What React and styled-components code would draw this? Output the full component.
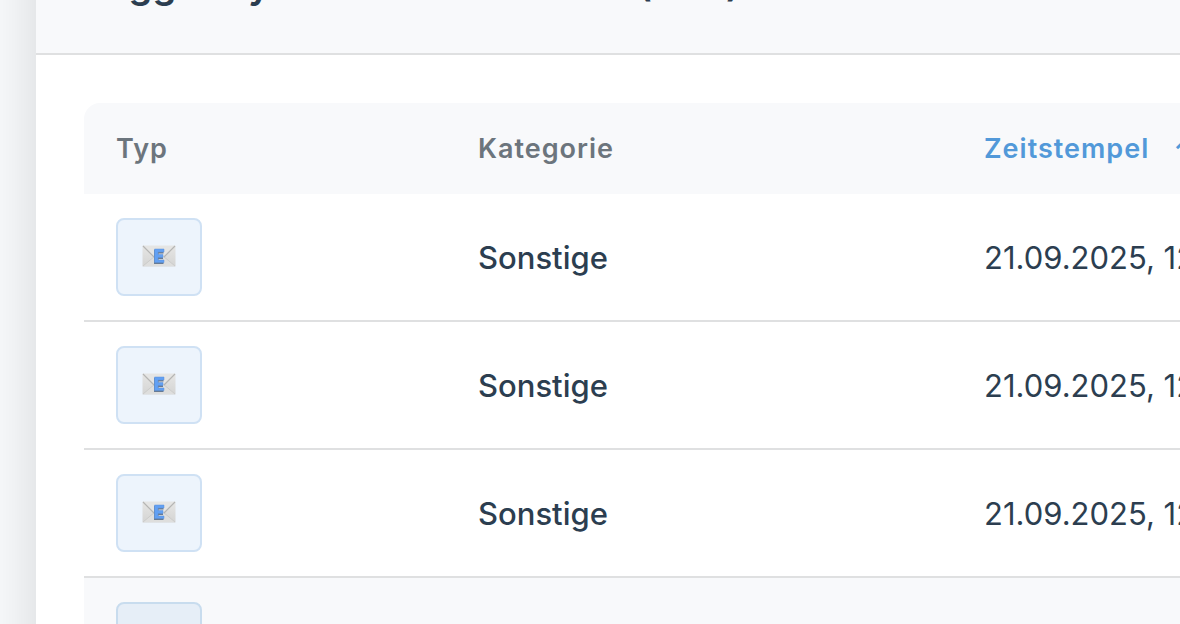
import React from "react";
import styled, { createGlobalStyle } from "styled-components";

const GlobalStyle = createGlobalStyle`
  * { box-sizing: border-box; }
  html, body, #root { height: 100%; }
  body {
    margin: 0;
    overflow: hidden;
    background: #f8fafc;
    color: #2c3e50;
    font-family: Inter, "Liberation Sans", sans-serif;
  }
`;

const Page = styled.main`
  height: 100%;
  overflow: hidden;
  padding-left: 36px;
`;

const Card = styled.section`
  min-height: calc(100% + 72px);
  margin-top: -72px;
  background: #fff;
  box-shadow: 0 8px 56px rgba(0, 0, 0, 0.15);
`;

const CardHeader = styled.header`
  padding: 34px 48px 46px;
  background: #f8f9fb;
  border-bottom: 2px solid #dfe0e1;
`;

const Title = styled.h1`
  margin: 0;
  font-size: 38px;
  line-height: 45px;
  font-weight: 600;
  white-space: nowrap;
`;

const TableArea = styled.div`
  padding: 48px 0 0 48px;
  overflow: hidden;
`;

const Table = styled.table`
  width: 150%;
  table-layout: fixed;
  border-collapse: separate;
  border-spacing: 0;
`;

const Column = styled.col`
  width: ${({ $width }) => $width};
`;

const HeadCell = styled.th`
  height: 91px;
  padding: 0 32px;
  background: #f8f9fb;
  color: #6c757d;
  text-align: left;
  font-size: 27px;
  line-height: 32px;
  font-weight: 600;
  letter-spacing: 1px;
  &:first-child { border-top-left-radius: 16px; }
`;

const SortButton = styled.button`
  display: inline-flex;
  align-items: center;
  gap: 24px;
  padding: 0;
  border: 0;
  background: none;
  color: #5299d9;
  font: inherit;
  letter-spacing: inherit;
  cursor: pointer;
`;

const Row = styled.tr`
  background: ${({ $active }) => ($active ? "#f8f9fb" : "#fff")};
`;

const Cell = styled.td`
  height: 128px;
  padding: 26px 32px 24px;
  border-bottom: 2px solid #dfe0e1;
  font-size: 31px;
  line-height: 48px;
  font-weight: ${({ $strong }) => ($strong ? 500 : 400)};
  white-space: nowrap;
`;

const TypeCell = styled(Cell)`
  padding: 24px 32px;
`;

const TypeBadge = styled.span`
  display: flex;
  align-items: center;
  justify-content: center;
  width: 86px;
  height: 78px;
  padding-bottom: 2px;
  border: 2px solid ${({ $active }) => ($active ? "#c8dcee" : "#cfe1f4")};
  border-radius: 8px;
  background: ${({ $active }) => ($active ? "#e6eef7" : "#edf4fc")};
`;

function MailIcon() {
  return (
    <svg width="34" height="22" viewBox="0 0 34 22" role="img" aria-label="E-Mail">
      <defs>
        <linearGradient id="paper" x1="0" y1="0" x2="0" y2="1">
          <stop offset="0" stopColor="#e6e6e5" />
          <stop offset="1" stopColor="#d4d4d3" />
        </linearGradient>
      </defs>
      <rect x="0.5" y="0.5" width="33" height="21" rx="0.5" fill="url(#paper)" />
      <path d="M1 21 13 10h8l12 11z" fill="#dededd" />
      <path d="M1 21 13 11M33 21 21 11" stroke="#cbcbca" strokeWidth="1" />
      <path d="M1 1h32L21 12q-4 3-8 0z" fill="#e5e5e4" />
      <path d="M1 1 12 12M33 1 22 12" stroke="#b5b5b4" strokeWidth="1.2" />
      <path d="M12 19V5h9.5v3.5h-5V11h4.5v3h-4.5v2h5v3z" fill="#687b94" />
      <path d="M12.5 17.5V4H22v3h-6v2.5h5v3h-5v2.5h6v2.5z" fill="#62a0f3" stroke="#5f93d8" strokeWidth="0.5" />
    </svg>
  );
}

const events = [
  { id: 1, category: "Sonstige", time: "21.09.2025, 12:45:10" },
  { id: 2, category: "Sonstige", time: "21.09.2025, 12:44:52" },
  { id: 3, category: "Sonstige", time: "21.09.2025, 12:44:31" },
  { id: 4, category: "Sonstige", time: "21.09.2025, 12:43:08", active: true },
];

export default function App() {
  return (
    <>
      <GlobalStyle />
      <Page>
        <Card>
          <CardHeader>
            <Title>Logger System Informationen (469)</Title>
          </CardHeader>
          <TableArea>
            <Table>
              <colgroup>
                <Column $width="362px" />
                <Column $width="506px" />
                <Column />
              </colgroup>
              <thead>
                <tr>
                  <HeadCell scope="col">Typ</HeadCell>
                  <HeadCell scope="col">Kategorie</HeadCell>
                  <HeadCell scope="col" aria-sort="ascending">
                    <SortButton type="button">
                      Zeitstempel <span aria-hidden="true">↑</span>
                    </SortButton>
                  </HeadCell>
                </tr>
              </thead>
              <tbody>
                {events.map((event) => (
                  <Row key={event.id} $active={event.active}>
                    <TypeCell>
                      <TypeBadge $active={event.active}>
                        <MailIcon />
                      </TypeBadge>
                    </TypeCell>
                    <Cell $strong>{event.category}</Cell>
                    <Cell>{event.time}</Cell>
                  </Row>
                ))}
              </tbody>
            </Table>
          </TableArea>
        </Card>
      </Page>
    </>
  );
}
